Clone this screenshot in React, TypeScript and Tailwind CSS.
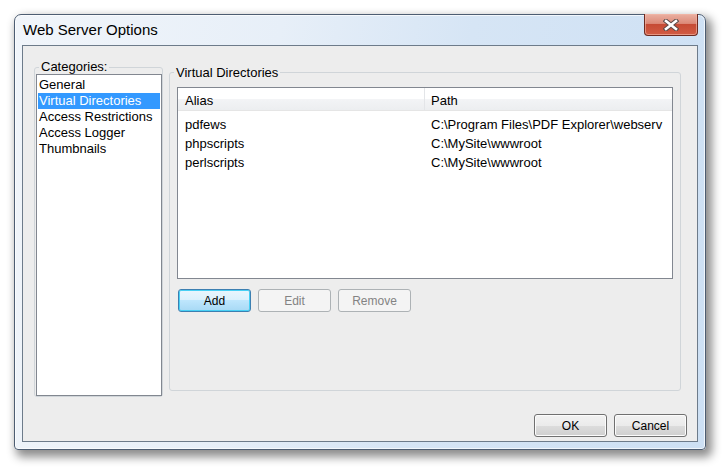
import React from 'react';

const categories = ['General', 'Virtual Directories', 'Access Restrictions', 'Access Logger', 'Thumbnails'];

const dirs = [
    { alias: 'pdfews', path: 'C:\\Program Files\\PDF Explorer\\webserv' },
    { alias: 'phpscripts', path: 'C:\\MySite\\wwwroot' },
    { alias: 'perlscripts', path: 'C:\\MySite\\wwwroot' },
];

type BtnKind = 'normal' | 'default' | 'disabled';

const VistaButton: React.FC<{ label: string; kind?: BtnKind }> = ({ label, kind = 'normal' }) => {
    const styles: Record<BtnKind, string> = {
        normal: 'border-[#707070] text-black bg-[linear-gradient(to_bottom,#f2f2f2_0%,#ebebeb_50%,#dddddd_50%,#cfcfcf_100%)] shadow-[inset_0_0_0_1px_#fcfcfc]',
        default: 'border-[#3c7fb1] text-black bg-[linear-gradient(to_bottom,#eaf6fd_0%,#d9f0fc_50%,#bee6fd_50%,#a7d9f5_100%)] shadow-[inset_0_0_0_1px_#48d0f4]',
        disabled: 'border-[#adb2b5] text-[#838383] bg-[#f4f4f4]',
    };
    return (
        <button className={`w-[73px] h-[23px] rounded-[3px] border text-[12px] leading-none ${styles[kind]}`}>
            {label}
        </button>
    );
};

const App: React.FC = () => {
    return (
        <div className="w-[722px] h-[469px] bg-white pt-[14px] pl-[14px] font-['Liberation_Sans',Arial,sans-serif] text-black">
            <div className="w-[692px] h-[436px] flex flex-col rounded-t-[7px] rounded-b-[4px] border border-[#4d5d72] bg-[linear-gradient(100deg,#f1f5fa_0%,#e7eff8_35%,#d6e5f5_60%,#cde0f4_100%)] shadow-[inset_0_0_0_1px_#ffffffb0,4px_5px_10px_2px_rgba(0,0,0,0.45)]">
                {/* title bar */}
                <div className="h-[30px] flex justify-between items-start">
                    <div className="pl-[8px] pt-[6px] text-[15px] leading-[18px] text-black">Web Server Options</div>
                    <div className="mr-[7px] -mt-[1px] w-[54px] h-[22px] flex items-center justify-center rounded-b-[4px] border border-t-0 border-[#6e2a20] bg-[linear-gradient(to_bottom,#eab0a2_0%,#dc8a78_45%,#c64b35_50%,#d25c44_100%)] shadow-[inset_0_0_0_1px_#f3b8a8a0]">
                        <svg width="16" height="12" viewBox="0 0 16 12">
                            <path d="M3 2 L13 10 M13 2 L3 10" stroke="#5a4a48" strokeWidth="4.6" strokeLinecap="square" fill="none" />
                            <path d="M3 2 L13 10 M13 2 L3 10" stroke="#ffffff" strokeWidth="2.6" strokeLinecap="square" fill="none" />
                        </svg>
                    </div>
                </div>

                {/* client */}
                <div className="mx-[7px] h-[397px] flex flex-col border border-[#6d7b8a] bg-[#ededed] text-[13px]">
                    <div className="flex items-start pl-[11px]">
                        <fieldset className="mt-[14px] w-[129px] h-[337px] rounded-[3px] border border-[#d0d5d9]">
                            <legend className="ml-[4px] px-[2px] leading-[14px]">Categories:</legend>
                            <div className="ml-[1px] w-[126px] h-[322px] border border-[#828790] bg-white p-[1px] pt-[2px]">
                                {categories.map((c) => (
                                    <div
                                        key={c}
                                        className={`h-[16px] leading-[16px] pl-[1px] whitespace-nowrap ${c === 'Virtual Directories' ? 'bg-[#3399ff] text-white' : ''}`}
                                    >
                                        {c}
                                    </div>
                                ))}
                            </div>
                        </fieldset>

                        <fieldset className="ml-[6px] mt-[19px] w-[512px] h-[326px] rounded-[3px] border border-[#d0d5d9] pl-[7px] pt-[7px]">
                            <legend className="-ml-[3px] px-[2px] leading-[15px]">Virtual Directories</legend>
                            <div className="w-[496px] h-[192px] border border-[#828790] bg-white">
                                <div className="h-[23px] flex border-b border-[#e5e5e5] bg-[linear-gradient(to_bottom,#ffffff_0%,#ffffff_50%,#f3f4f6_50%,#eceef0_100%)]">
                                    <div className="w-[247px] pl-[7px] pt-[2px] leading-[21px] border-r border-[#e3e5e8]">Alias</div>
                                    <div className="pl-[6px] pt-[2px] leading-[21px]">Path</div>
                                </div>
                                <div className="pt-[4px]">
                                    {dirs.map((d) => (
                                        <div key={d.alias} className="h-[19px] leading-[19px] flex">
                                            <div className="w-[247px] pl-[7px]">{d.alias}</div>
                                            <div className="pl-[6px] whitespace-nowrap">{d.path}</div>
                                        </div>
                                    ))}
                                </div>
                            </div>
                            <div className="mt-[10px] ml-[1px] flex gap-[7px]">
                                <VistaButton label="Add" kind="default" />
                                <VistaButton label="Edit" kind="disabled" />
                                <VistaButton label="Remove" kind="disabled" />
                            </div>
                        </fieldset>
                    </div>

                    <div className="mt-auto flex justify-end gap-[7px] pr-[10px] pb-[4px]">
                        <VistaButton label="OK" />
                        <VistaButton label="Cancel" />
                    </div>
                </div>
            </div>
        </div>
    );
};

export default App;
